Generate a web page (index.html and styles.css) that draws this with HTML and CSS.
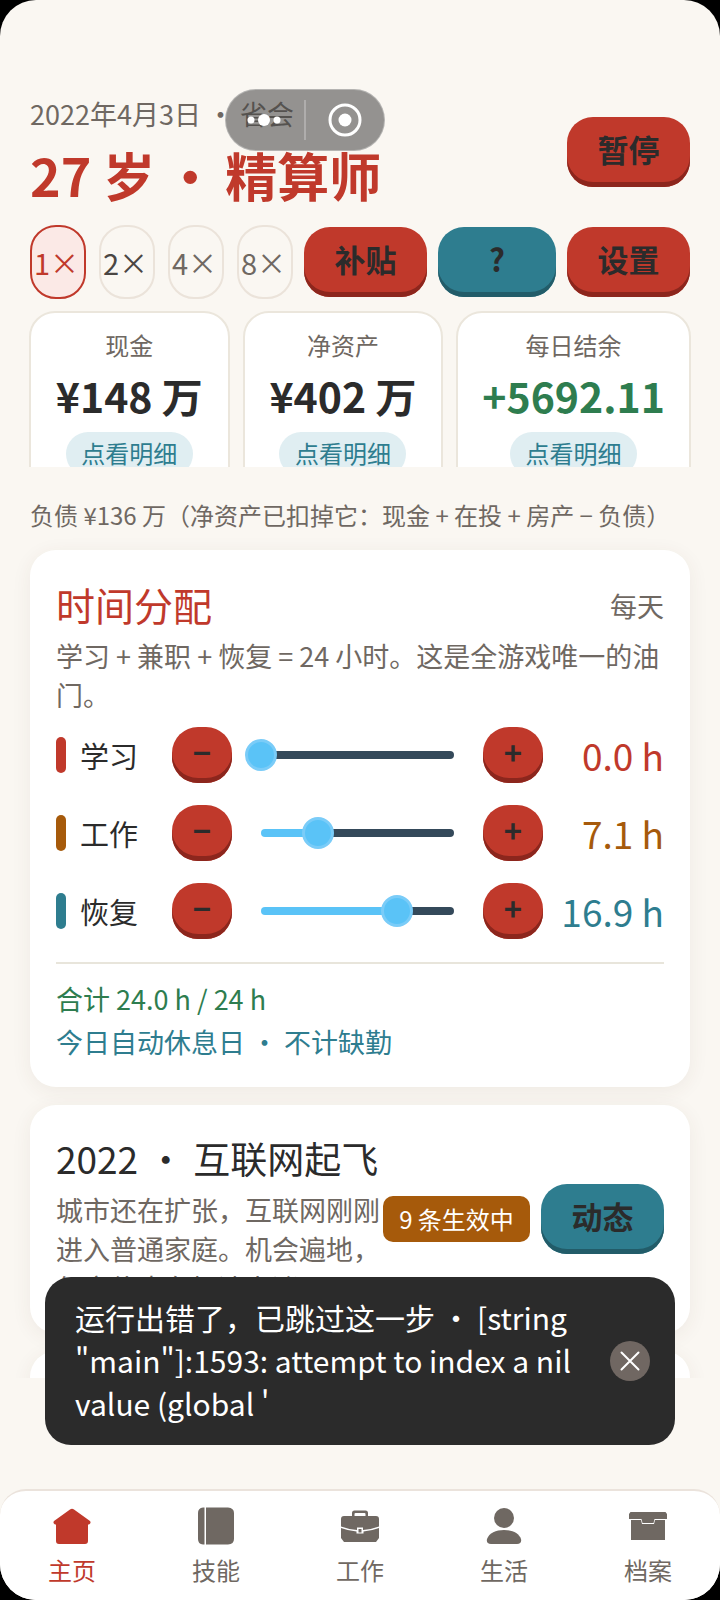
FILE: index.html
```html
<!DOCTYPE html>
<html lang="zh-CN">
<head>
    <meta charset="UTF-8">
    <meta name="viewport" content="width=device-width, initial-scale=1.0">
    <title>27 岁 ・ 精算师</title>
    <link rel="stylesheet" href="styles.css">
</head>
<body>
    <div class="screen">
        <header class="header">
            <div class="header-top">
                <div>
                    <p class="date">2022年4月3日<span class="dot">・</span>省会</p>
                    <h1>27 岁<span class="dot">・</span>精算师</h1>
                </div>
                <button class="btn">暂停</button>
            </div>
            <div class="toolbar">
                <div class="speeds">
                    <button class="speed active">1<span class="times">×</span></button>
                    <button class="speed current">2<span class="times">×</span></button>
                    <button class="speed">4<span class="times">×</span></button>
                    <button class="speed">8<span class="times">×</span></button>
                </div>
                <button class="btn">补贴</button>
                <button class="btn btn-teal btn-help">?</button>
                <button class="btn">设置</button>
            </div>
        </header>

        <section class="stats">
            <div class="stat">
                <span class="stat-label">现金</span>
                <strong class="stat-value">¥148 万</strong>
                <button class="stat-link">点看明细</button>
            </div>
            <div class="stat">
                <span class="stat-label">净资产</span>
                <strong class="stat-value">¥402 万</strong>
                <button class="stat-link">点看明细</button>
            </div>
            <div class="stat">
                <span class="stat-label">每日结余</span>
                <strong class="stat-value green">+5692.11</strong>
                <button class="stat-link">点看明细</button>
            </div>
        </section>

        <p class="debt">负债 ¥136 万（净资产已扣掉它：现金 + 在投 + 房产 − 负债）</p>

        <main class="cards">
            <section class="card">
                <div class="card-head">
                    <h2 class="title-red">时间分配</h2>
                    <span>每天</span>
                </div>
                <p class="desc">学习 + 兼职 + 恢复 = 24 小时。这是全游戏唯一的油门。</p>

                <div class="alloc">
                    <div class="alloc-row red">
                        <label for="study">学习</label>
                        <button class="step" aria-label="减少学习">−</button>
                        <div class="slider" style="--fill: 0%"><input type="range" id="study" min="0" max="24" step="0.1" value="0"></div>
                        <button class="step" aria-label="增加学习">+</button>
                        <output for="study">0.0 h</output>
                    </div>
                    <div class="alloc-row brown">
                        <label for="work">工作</label>
                        <button class="step" aria-label="减少工作">−</button>
                        <div class="slider" style="--fill: 29.6%"><input type="range" id="work" min="0" max="24" step="0.1" value="7.1"></div>
                        <button class="step" aria-label="增加工作">+</button>
                        <output for="work">7.1 h</output>
                    </div>
                    <div class="alloc-row teal">
                        <label for="rest">恢复</label>
                        <button class="step" aria-label="减少恢复">−</button>
                        <div class="slider" style="--fill: 70.4%"><input type="range" id="rest" min="0" max="24" step="0.1" value="16.9"></div>
                        <button class="step" aria-label="增加恢复">+</button>
                        <output for="rest">16.9 h</output>
                    </div>
                </div>

                <div class="total">
                    <p class="green">合计 24.0 h / 24 h</p>
                    <p class="teal">今日自动休息日<span class="dot">・</span>不计缺勤</p>
                </div>
            </section>

            <section class="card era">
                <div class="era-text">
                    <h2>2022<span class="dot">・</span>互联网起飞</h2>
                    <p class="desc">城市还在扩张，互联网刚刚进入普通家庭。机会遍地，但房价也在加速上涨。</p>
                </div>
                <span class="tag">9 条生效中</span>
                <button class="btn btn-teal">动态</button>
            </section>

            <section class="card"></section>
        </main>

        <nav class="tabs">
            <a href="#home" class="tab active">
                <svg viewBox="0 0 38 38"><path d="M17 2.500Q19 1 21 2.500L37 14Q38.500 16 36 17.500H35V34Q35 37 32 37H6Q3 37 3 34V17.500H2Q-.5 16 1 14Z"/></svg>
                主页
            </a>
            <a href="#skills" class="tab">
                <svg viewBox="0 0 38 38"><path d="M6 .5H7.500V37.500H6Q1 37 1 32V6Q1 1 6 .5Z"/><path d="M9 .5H31Q37 1 37 6V32Q37 37 31 37.500H9Z"/></svg>
                技能
            </a>
            <a href="#job" class="tab">
                <svg viewBox="0 0 38 38"><path d="M11 9V6Q11 3.500 13.500 3.500H24.500Q27 3.500 27 6V9H35Q38 9 38 12V19.500Q30 22.500 22 23V20.500H16V23Q8 22.500 0 19.500V12Q0 9 3 9ZM13.500 9H24.500V7Q24.500 6 23.500 6H14.500Q13.500 6 13.500 7Z"/><path d="M0 21Q8 24 15.500 24.500V26.500H22.500V24.500Q30 24 38 21V31L35 35H3L0 31Z"/><path d="M17.500 22H20.500V25.500H17.500Z"/></svg>
                工作
            </a>
            <a href="#life" class="tab">
                <svg viewBox="0 0 38 38"><circle cx="19" cy="11" r="10"/><path d="M2 32C4 26 11 23 19 23S34 26 36 32Q37 37 32 37H6Q1 37 2 32Z"/></svg>
                生活
            </a>
            <a href="#archive" class="tab">
                <svg viewBox="0 0 38 38"><path d="M1.500 5H36.500L38 7V12H25.500L24.500 16H13.500L12.500 12H0V7Z"/><path d="M2 13H12L13 17H25L26 13H36V33H2Z"/></svg>
                档案
            </a>
        </nav>

        <div class="capsule">
            <button aria-label="更多">
                <svg width="36" height="14" viewBox="0 0 36 14"><circle cx="4" cy="7" r="3.500"/><circle cx="17" cy="7" r="6"/><circle cx="30" cy="7" r="3.500"/></svg>
            </button>
            <button aria-label="关闭">
                <svg width="34" height="34" viewBox="0 0 34 34"><circle cx="17" cy="17" r="15" fill="none" stroke="#fff" stroke-width="3"/><circle cx="17" cy="17" r="6.500"/></svg>
            </button>
        </div>

        <div class="toast" role="alert">
            <p>运行出错了，已跳过这一步<span class="dot">・</span>[string "main"]:1593: attempt to index a nil value (global '</p>
            <button class="toast-close" aria-label="关闭提示">
                <svg width="20" height="20" viewBox="0 0 20 20"><path d="M1.500 1.500 18.500 18.500M18.500 1.500 1.500 18.500"/></svg>
            </button>
        </div>
    </div>
</body>
</html>
```

FILE: styles.css
```css
* {
    box-sizing: border-box;
}

body {
    margin: 0;
    background: #000;
    color: #2b2b2b;
    font-family: "Noto Sans CJK SC", sans-serif;
    font-size: 27px;
}

h1, h2, p {
    margin: 0;
}

button {
    border: none;
    padding: 0;
    color: inherit;
    font: inherit;
    cursor: pointer;
}

.screen {
    position: relative;
    display: flex;
    flex-direction: column;
    height: 100vh;
    min-height: 1200px;
    overflow: hidden;
    background: #faf7f2;
    border-radius: 36px;
}

.dot {
    margin: 0 6px;
}

h1 .dot,
h2 .dot {
    margin: 0 9px;
}

.red {
    color: #c0392b;
}

.brown {
    color: #a65a0b;
}

.teal {
    color: #2e7d8f;
}

.green {
    color: #2e7d4f;
}

/* header */
.header {
    flex: none;
    padding: 88px 30px 0;
}

.header-top {
    display: flex;
    align-items: center;
    justify-content: space-between;
}

.date {
    color: #6f6862;
    line-height: 52px;
}

h1 {
    padding-bottom: 6px;
    color: #c0392b;
    font-size: 52px;
    font-weight: 700;
    line-height: 70px;
}

.btn {
    flex: none;
    width: 123px;
    height: 70px;
    padding-bottom: 8px;
    border-radius: 26px;
    background: #c0392b;
    box-shadow: inset 0 -5px #8c261d;
    font-size: 31px;
    font-weight: 700;
}

.btn-teal {
    background: #2e7d8f;
    box-shadow: inset 0 -5px #225c69;
}

.toolbar {
    display: flex;
    align-items: center;
    gap: 11px;
    margin-top: 9px;
}

.speeds {
    display: flex;
    flex: 1;
    justify-content: space-between;
}

.speed {
    display: flex;
    align-items: center;
    justify-content: center;
    width: 56px;
    height: 74px;
    padding-right: 4px;
    border: 2px solid #ebe3da;
    border-radius: 26px;
    background: none;
    color: #6f6862;
    font-size: 29px;
}

.speed.current {
    color: #4a4643;
}

.speed.active {
    border-color: #c0392b;
    background: #fbe9e6;
    color: #c0392b;
}

.times {
    width: 28px;
    text-align: center;
}

.btn-help {
    width: 118px;
}

/* stats */
.stats {
    display: grid;
    flex: none;
    grid-template-columns: 200fr 200fr 234fr;
    gap: 13px;
    height: 156px;
    margin-top: 12px;
    padding: 0 29px;
    overflow: hidden;
}

.stat {
    display: flex;
    flex-direction: column;
    align-items: center;
    height: 190px;
    padding-top: 12px;
    border: 2px solid #ebe6dc;
    border-radius: 26px;
    background: #fff;
}

.stat-label {
    color: #6f6862;
    font-size: 24px;
    line-height: 40px;
}

.stat-value {
    font-size: 41px;
    font-weight: 700;
    line-height: 60px;
    white-space: nowrap;
}

.stat-link {
    flex: none;
    width: 127px;
    height: 44px;
    margin-top: 7px;
    padding-bottom: 4px;
    border-radius: 22px;
    background: #e0eef2;
    color: #2e7d8f;
    font-size: 24px;
}

.debt {
    flex: none;
    margin-top: 30px;
    padding: 0 30px;
    color: #6f6862;
    font-size: 24px;
    line-height: 36px;
    white-space: nowrap;
}

/* cards */
.cards {
    flex: 1;
    min-height: 0;
    margin-bottom: 111px;
    padding: 17px 30px 0;
    overflow: hidden;
}

.card {
    min-height: 200px;
    margin-bottom: 18px;
    padding: 24px 26px;
    border-radius: 26px;
    background: #fff;
    box-shadow: 0 4px 20px rgba(80, 60, 40, 0.07);
}

.card-head {
    display: flex;
    align-items: center;
    justify-content: space-between;
    color: #6f6862;
}

h2 {
    margin-bottom: 2px;
    font-size: 37px;
    font-weight: 400;
    line-height: 60px;
}

.title-red {
    color: #c0392b;
    font-size: 39px;
}

.desc {
    color: #6f6862;
    line-height: 39px;
}

.alloc {
    display: flex;
    flex-direction: column;
    gap: 22px;
    margin-top: 13px;
}

.alloc-row {
    display: flex;
    align-items: center;
}

.alloc-row label {
    display: flex;
    align-items: center;
    gap: 14px;
    width: 116px;
    color: #2b2b2b;
    font-size: 29px;
    line-height: 36px;
}

.alloc-row label::before {
    content: "";
    width: 10px;
    height: 36px;
    border-radius: 5px;
    background: #c0392b;
}

.alloc-row.brown label::before {
    background: #a65a0b;
}

.alloc-row.teal label::before {
    background: #2e7d8f;
}

.step {
    flex: none;
    width: 60px;
    height: 56px;
    padding-bottom: 6px;
    border-radius: 26px;
    background: #c0392b;
    box-shadow: inset 0 -5px #8c261d;
    color: #2b2b2b;
    font-size: 31px;
    font-weight: 700;
    line-height: 50px;
}

.slider {
    flex: 1;
    height: 8px;
    margin: 0 29px;
    border-radius: 4px;
    background: linear-gradient(to right, #5ac3f7 var(--fill), #34495a var(--fill));
}

.slider input {
    display: block;
    width: calc(100% + 32px);
    height: 32px;
    margin: -12px -16px;
    background: none;
    appearance: none;
}

.slider input::-webkit-slider-thumb {
    width: 32px;
    height: 32px;
    border: 3px solid #7accf8;
    border-radius: 50%;
    background: #5ac3f7;
    appearance: none;
}

.alloc-row output {
    width: 121px;
    font-size: 37px;
    line-height: 56px;
    text-align: right;
    white-space: nowrap;
}

.total {
    margin-top: 23px;
    padding-top: 13px;
    border-top: 2px solid #e8e5db;
    line-height: 43px;
}

.era {
    display: flex;
    align-items: center;
    height: 228px;
}

.era-text {
    flex: 1;
    padding-bottom: 4px;
}

.tag {
    flex: none;
    width: 147px;
    margin-right: 11px;
    border-radius: 10px;
    background: #a65a0b;
    color: #fff;
    font-size: 24px;
    line-height: 46px;
    text-align: center;
}

/* bottom tabs */
.tabs {
    display: flex;
    flex: none;
    height: 111px;
    border-top: 2px solid #ebe3dc;
    border-radius: 26px 26px 0 0;
    background: #fff;
}

.tab {
    display: flex;
    flex: 1;
    flex-direction: column;
    align-items: center;
    gap: 5px;
    padding-top: 16px;
    color: #6f6862;
    font-size: 24px;
    line-height: 40px;
    text-decoration: none;
}

.tab svg {
    width: 38px;
    height: 38px;
    fill: currentColor;
}

.tab.active {
    color: #c0392b;
}

/* floating capsule over the header */
.capsule {
    position: absolute;
    top: 89px;
    left: 225px;
    display: flex;
    align-items: center;
    width: 160px;
    height: 62px;
    border: 1px solid rgba(255, 255, 255, 0.3);
    border-radius: 31px;
    background: rgba(64, 64, 64, 0.55);
}

.capsule button {
    display: flex;
    flex: 1;
    align-items: center;
    justify-content: center;
    height: 40px;
    background: none;
}

.capsule button + button {
    border-left: 2px solid rgba(255, 255, 255, 0.25);
}

.capsule svg {
    fill: #fff;
}

/* error toast */
.toast {
    position: absolute;
    right: 45px;
    bottom: 155px;
    left: 45px;
    display: flex;
    align-items: center;
    gap: 17px;
    padding: 19px 25px 20px 30px;
    border-radius: 26px;
    background: #2b2b2b;
    color: #fff;
    font-size: 30px;
    line-height: 43px;
}

.toast p {
    flex: 1;
}

.toast-close {
    display: flex;
    flex: none;
    align-items: center;
    justify-content: center;
    width: 40px;
    height: 40px;
    border-radius: 50%;
    background: #706762;
}

.toast-close svg {
    fill: none;
    stroke: #fff;
    stroke-width: 2;
    stroke-linecap: round;
}
```
